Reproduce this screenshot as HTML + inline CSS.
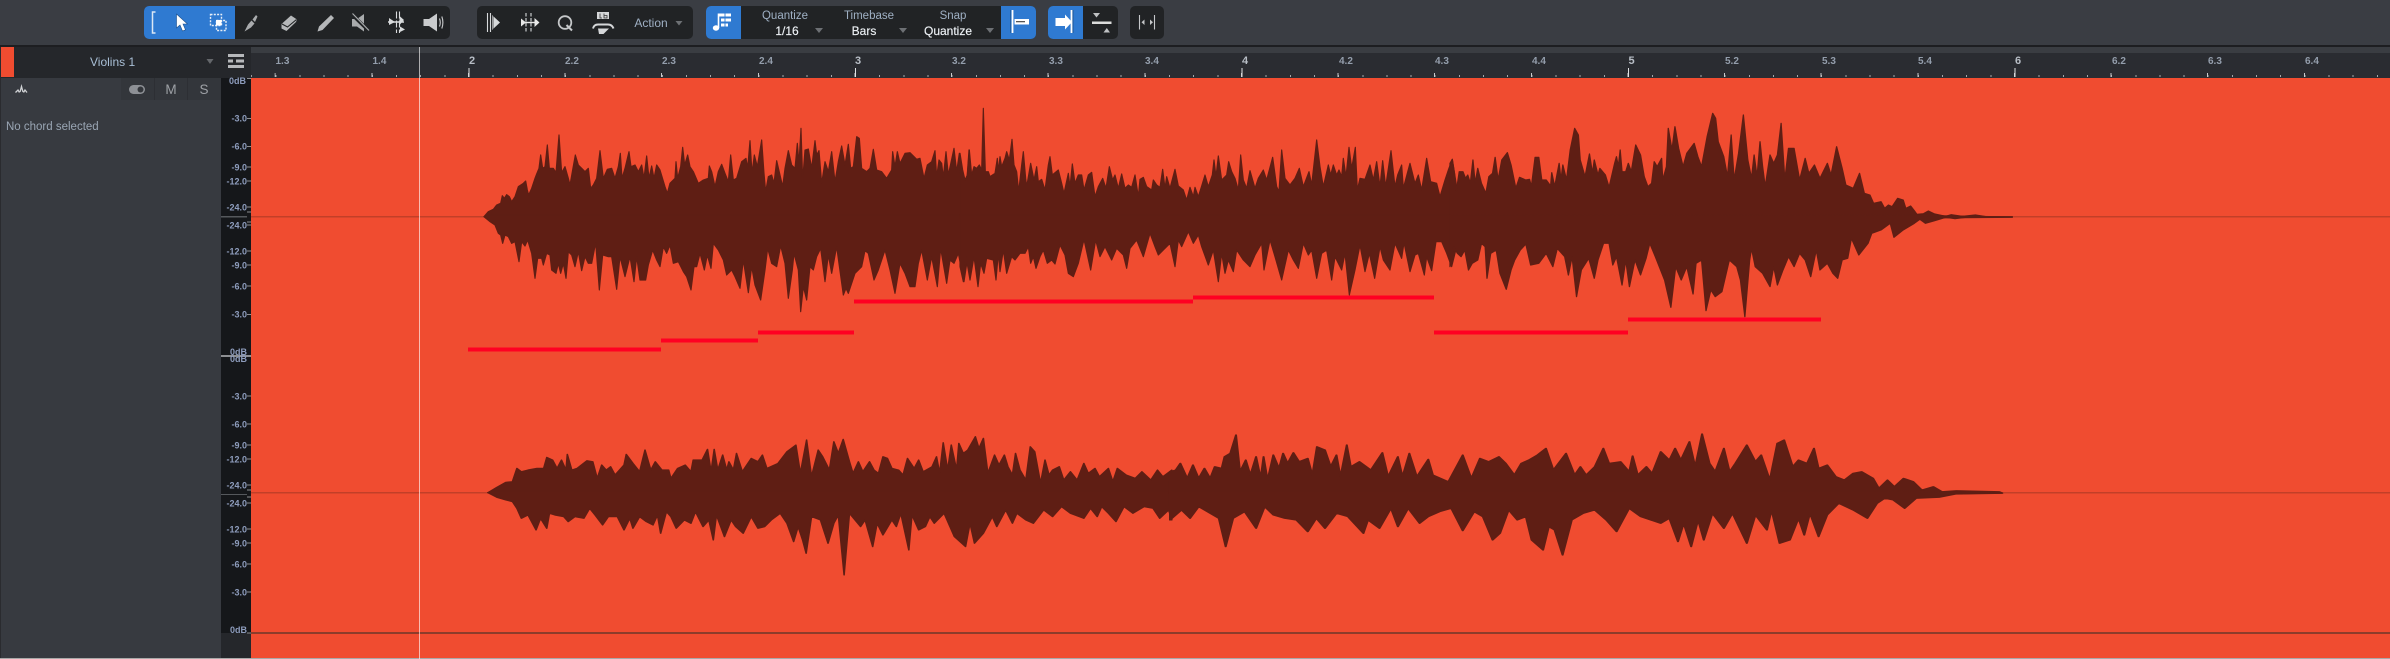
<!DOCTYPE html>
<html>
<head>
<meta charset="utf-8">
<style>
html,body{margin:0;padding:0;width:2390px;height:659px;overflow:hidden;background:#3a3d43}
svg{position:absolute;left:0;top:0;display:block}
text{font-family:"Liberation Sans",sans-serif}
.m{font-size:9px;font-weight:bold;fill:#8e9dbd;text-anchor:end}
.r{font-size:10px;font-weight:bold;fill:#949eac}
.b{font-size:11px;font-weight:bold;fill:#b8bec6}
.t{font-size:11.5px;fill:#9fb0c4;text-anchor:middle}
.v{font-size:12px;fill:#eef2f6;text-anchor:middle;stroke:#eef2f6;stroke-width:.15}
.tick{position:absolute;left:251px;width:2139px}
.w polygon{stroke:#5f1e14;stroke-width:3.500;stroke-linejoin:round}
</style>
</head>
<body>
<svg width="2390" height="659" viewBox="0 0 2390 659" xmlns="http://www.w3.org/2000/svg">
  <!-- base panels -->
  <rect width="2390" height="659" fill="#3a3d43"/>
  <rect y="45" width="2390" height="2" fill="#1d1e21"/>
  <rect x="1" y="47" width="250" height="31" fill="#25272b"/>
  <rect x="1" y="47" width="13" height="30" fill="#f04c30"/>
  <rect x="0" y="47" width="1" height="612" fill="#2a2b2f"/>
  <rect x="251" y="47" width="2139" height="31" fill="#2a2c31"/>
  <rect x="251" y="47" width="2139" height="6" fill="#3a3d42"/>
  <rect x="1" y="78" width="220" height="581" fill="#373a40"/>
  <rect x="121" y="78" width="100" height="22" fill="#33363b"/>
  <path d="M154.500 78V100M187.500 78V100" stroke="#2d2f34"/>
  <rect x="221" y="78" width="30" height="555" fill="#15171a"/>
  <rect x="221" y="633" width="30" height="26" fill="#25272b"/>
  <rect x="251" y="78" width="2139" height="580" fill="#f04c30"/>
  <rect y="658" width="2390" height="1" fill="#a9a9a9"/>

  <!-- toolbar groups -->
  <rect x="144" y="6" width="306" height="33" rx="5" fill="#212325"/>
  <path d="M235 6H149a5 5 0 0 0-5 5V34a5 5 0 0 0 5 5H235z" fill="#2f7ad1"/>
  <rect x="477" y="6" width="216" height="33" rx="5" fill="#212325"/>
  <rect x="706" y="6" width="330" height="33" rx="5" fill="#212325"/>
  <path d="M741 6H711a5 5 0 0 0-5 5V34a5 5 0 0 0 5 5H741z" fill="#2f7ad1"/>
  <path d="M1001 6H1031a5 5 0 0 1 5 5V34a5 5 0 0 1-5 5H1001z" fill="#2f7ad1"/>
  <rect x="1048" y="6" width="70" height="33" rx="5" fill="#212325"/>
  <path d="M1083 6H1053a5 5 0 0 0-5 5V34a5 5 0 0 0 5 5H1083z" fill="#2f7ad1"/>
  <rect x="1130" y="6" width="34" height="33" rx="5" fill="#212325"/>

  <!-- tool icons -->
  <path d="M155.500 12H152.500V33H155.500" fill="none" stroke="#dbe7f5" stroke-width="1.500"/>
  <path d="M176.500 14V28L180 25 182.500 31 185.500 29.800 183 24H187.500z" fill="#fff" stroke="#1c4f8a" stroke-width=".6"/>
  <g fill="none" stroke="#e6eef8" stroke-width="1.400" stroke-dasharray="2 1.300"><rect x="210.500" y="14.500" width="11" height="11"/><rect x="216.500" y="20.500" width="9.500" height="10"/></g>
  <rect x="216" y="20" width="5.500" height="5.500" fill="#fff"/>
  <path d="M244.500 31.500 248 24.500 251.500 20.500 254.500 23.500 251 27.500zM252.500 19.500 256 15 257.500 16.500 255 22z" fill="#a9abad"/>
  <path d="M281.500 24 291 15.500 297 19.500 296 22 286.500 31 281.500 28.500z" fill="#b5b7b9"/><path d="M282 24 287.500 27 296.500 19.500" fill="none" stroke="#212325" stroke-width="1.100"/>
  <path d="M317.500 31.500 319 26.500 331 15 334 18 322.500 30z" fill="#b5b7b9"/>
  <path d="M352 19H357L364 14V31.500L357 26.500H352z" fill="#a9abad"/><path d="M352 14.500 369 31" stroke="#212325" stroke-width="3.500"/><path d="M352.500 13.500 369 30.500" stroke="#a9abad" stroke-width="1.200"/>
  <path d="M396.500 11.500V33M399.500 11.500V33" stroke="#d8dadc" stroke-width="1.100" stroke-dasharray="7 2"/>
  <path d="M388 22H404" stroke="#d8dadc" stroke-width="1.500"/><path d="M389 18 395 22 389 25zM404 20 399.500 16V25zM400 26.500 405 29.500 400 32z" fill="#d8dadc"/>
  <path d="M423.500 19H429L437 13.500V31.500L429 26H423.500z" fill="#c9cbcd"/><path d="M439.500 18.500Q441 22.500 439.500 26.500M441.800 16.500Q444 22.500 441.800 28.500" fill="none" stroke="#c9cbcd" stroke-width="1.100"/>

  <path d="M487.500 13V32M490.500 13V32" stroke="#d8dadc" stroke-width="1.100"/><path d="M492 15 500 22.500 492 30z" fill="#d8dadc"/><path d="M493 15V30" stroke="#212325" stroke-width=".7"/>
  <path d="M526 13V32M531 13V32" stroke="#d8dadc" stroke-width="1.100" stroke-dasharray="3.500 1.500"/><path d="M523 22.500H537" stroke="#e8e8e8" stroke-width="1.400"/><path d="M521 18.500 526 22.500 521 26.500zM534.500 18 539.500 22.500 534.500 27z" fill="#e8e8e8"/>
  <circle cx="565" cy="22.500" r="6.300" fill="none" stroke="#c5c7c9" stroke-width="1.800"/><path d="M566.500 25 572 30.500" stroke="#c5c7c9" stroke-width="2"/>
  <rect x="597" y="12" width="12" height="7" fill="#d5d7d9"/><path d="M600 13.500V18H602M604 13.500V18H607V15.500H604" fill="none" stroke="#333" stroke-width=".8"/>
  <path d="M593 28.500Q594 24.500 598 24.500H608Q612 24.500 613.500 28.500" fill="none" stroke="#d5d7d9" stroke-width="2"/>
  <path d="M598 28.500H609L603.500 34H599z" fill="#d5d7d9"/>
  <path d="M718.500 13.500V28" stroke="#fff" stroke-width="1.600"/><ellipse cx="716" cy="28" rx="3.200" ry="2.700" fill="#fff"/>
  <path d="M719 13.500H731V16.500H719zM721 18.500H731V21.500H721zM721 23.500H728V26.500H721z" fill="#fff"/><path d="M725 13.500V27" stroke="#2f7ad1" stroke-width=".9"/>

  <path d="M1012.500 10V33" stroke="#fff" stroke-width="1.800"/><path d="M1010.800 10V33" stroke="#16406e" stroke-width=".5"/>
  <rect x="1014.500" y="19" width="14.500" height="5.500" fill="#fff"/><rect x="1016" y="21" width="9" height="1.300" fill="#555"/>
  <path d="M1055.500 18H1065V14.500L1072 22 1065 29.500V26H1055.500z" fill="#fff"/><path d="M1071.500 10V33" stroke="#fff" stroke-width="1.800"/><path d="M1073 10V33" stroke="#16406e" stroke-width=".6"/>
  <path d="M1093 13H1100L1096.500 17.500zM1103.500 32.500H1110L1106.800 28z" fill="#bfc1c3"/><rect x="1092" y="21.500" width="19.500" height="2.500" fill="#dcdcdc"/>
  <path d="M1139.500 15V29.500M1154.500 15V29.500" stroke="#c5c7c9" stroke-width="1.100"/><path d="M1144.500 19.500 1141.500 22.300 1144.500 25zM1150 19.500 1153 22.300 1150 25z" fill="#c5c7c9"/>

  <!-- toolbar text -->
  <text class="t" x="651" y="27" style="font-size:12px">Action</text>
  <path d="M675.500 21H682.500L679 25.500z" fill="#6d7074"/>
  <text class="t" x="785" y="19">Quantize</text>
  <text class="v" x="787" y="35">1/16</text>
  <path d="M815 28H823L819 33z" fill="#6d7074"/>
  <text class="t" x="869" y="19">Timebase</text>
  <text class="v" x="864" y="35">Bars</text>
  <path d="M899 28H907L903 33z" fill="#6d7074"/>
  <text class="t" x="953" y="19">Snap</text>
  <text class="v" x="948" y="35">Quantize</text>
  <path d="M986 28H994L990 33z" fill="#6d7074"/>

  <!-- track header -->
  <text x="90" y="66" style="font-size:12px;fill:#a9bfd6">Violins 1</text>
  <path d="M206.500 59H213.500L210 64z" fill="#64676b"/>
  <path d="M228 54H244V57H228zM228 59.500H233V62.500H228zM236 59.500H244V62.500H236zM228 65H244V68H228z" fill="#b6b8bb"/>
  <path d="M15.500 92.500 18 90 19.500 92.500M20 92 21.500 86.500 23 92M23.500 92.500 25 90 27 92.500" fill="none" stroke="#d0d2d5" stroke-width="1.300"/>
  <rect x="129" y="85" width="16" height="9" rx="4.500" fill="#8d9095"/><circle cx="140.500" cy="89.500" r="3" fill="#33363b"/>
  <text x="171" y="94" text-anchor="middle" style="font-size:13.500px;fill:#9ea1a6">M</text>
  <text x="204" y="94" text-anchor="middle" style="font-size:13.500px;fill:#9ea1a6">S</text>
  <text x="6" y="130" style="font-size:11.500px;fill:#9aa6b4">No chord selected</text>

  <!-- centre lines -->
  <rect x="251" y="216" width="2139" height="1.500" fill="#c23f28"/>
  <rect x="251" y="492" width="2139" height="1.500" fill="#c23f28"/>
  <rect x="251" y="632" width="2139" height="2" fill="#8c3c2b"/>
  <rect x="221" y="216" width="26" height="1.500" fill="#55585c"/>
  <rect x="221" y="494" width="26" height="1" fill="#55585c"/>
  <rect x="221" y="355" width="30" height="2" fill="#8d8f92"/>

  <!-- waveforms upper -->
  <g fill="#5f1e14" class="w">
  <g transform="translate(470,100) scale(.33333)">
  <polygon points="42,350 55,335 70,328 80,315 92,310 97,287 103,295 110,284 118,290 125,305 135,290 145,260 160,250 167,243 172,270 176,285 185,265 195,235 200,222 207,205 212,165 218,205 225,200 232,135 238,205 250,205 258,218 267,105 275,218 285,200 295,235 300,255 307,215 316,165 325,195 335,205 345,215 355,205 362,265 370,255 380,235 390,152 400,235 412,208 425,205 435,235 445,200 451,160 456,235 465,205 477,155 483,200 495,195 505,215 515,195 522,235 530,168 537,235 545,198 552,235 560,195 570,210 585,260 592,280 600,250 615,235 618,185 623,235 632,200 638,142 644,195 653,165 660,200 670,215 685,250 700,240 715,235 718,198 725,215 735,260 745,215 755,193 765,220 775,245 782,165 790,240 800,235 815,185 828,175 833,205 840,122 846,220 853,165 862,200 875,120 882,220 887,275 895,230 905,225 912,250 920,182 930,225 938,260 945,205 955,152 965,195 975,205 982,130 987,190 993,85 998,240 1005,150 1015,147 1025,205 1035,122 1040,165 1047,152 1055,250 1065,185 1075,215 1085,155 1095,245 1105,185 1115,138 1125,195 1135,133 1142,205 1150,200 1160,110 1168,115 1175,205 1190,215 1200,205 1210,148 1220,210 1235,215 1250,235 1265,210 1268,155 1275,200 1282,155 1290,190 1305,160 1320,158 1340,178 1350,175 1362,235 1372,195 1385,185 1395,152 1400,230 1407,180 1415,190 1420,232 1428,155 1435,225 1452,145 1460,215 1468,160 1480,235 1490,250 1497,150 1500,250 1500,356 50,356"/>
  <polygon points="42,350 60,365 75,375 85,400 92,405 98,430 105,405 115,410 125,430 135,425 147,485 155,425 165,438 173,420 185,460 195,535 203,475 215,475 220,495 230,460 240,465 245,510 258,520 265,490 272,520 280,490 288,535 295,455 305,465 315,500 325,455 335,512 345,470 355,490 365,490 377,428 388,570 398,465 415,470 425,470 440,568 450,470 465,530 480,470 492,545 500,470 510,540 527,540 535,495 548,450 560,480 570,500 580,440 590,460 600,435 610,490 625,485 640,515 650,530 663,570 672,500 680,500 690,460 703,510 712,465 723,505 730,430 745,450 760,480 770,525 785,510 795,530 810,565 820,480 835,578 845,500 855,555 872,600 885,510 893,445 905,490 920,500 932,437 945,490 955,595 967,510 972,460 985,510 992,635 1000,560 1010,600 1020,500 1030,510 1040,470 1052,445 1065,545 1075,465 1085,520 1100,440 1120,585 1128,565 1135,580 1145,550 1155,520 1175,500 1185,452 1195,460 1212,540 1225,510 1245,450 1260,510 1275,580 1290,490 1305,520 1320,560 1335,560 1345,490 1355,450 1372,540 1385,470 1402,560 1412,445 1430,550 1440,480 1452,490 1465,460 1482,545 1495,460 1500,470 1500,344 50,344"/>
  </g>
  <g transform="translate(960,100) scale(.33333)">
  <polygon points="0,160 8,210 15,240 22,225 28,150 35,225 42,200 50,205 58,195 65,210 70,25 76,215 85,215 90,230 105,220 112,175 115,215 120,170 125,200 135,175 140,155 148,180 156,118 162,195 170,215 176,275 185,195 190,155 197,235 200,260 212,190 222,240 230,200 235,245 245,238 255,270 265,195 270,170 277,225 295,210 305,250 312,280 325,220 330,260 337,192 345,250 355,225 365,225 372,270 385,225 395,217 405,290 415,260 428,235 438,265 448,200 458,240 465,225 475,265 485,222 495,265 505,255 515,262 525,225 535,290 540,238 550,232 560,260 575,270 580,240 590,255 600,262 608,208 615,265 620,230 630,265 645,208 655,258 670,270 680,300 690,262 700,290 705,262 715,290 725,258 735,225 745,260 757,225 762,180 768,230 775,168 785,240 800,225 806,185 815,215 825,235 835,270 842,165 850,240 860,265 870,212 885,265 895,235 910,210 920,240 938,172 950,260 957,275 965,150 975,235 990,255 1005,235 1018,205 1030,260 1047,215 1055,255 1070,120 1080,200 1090,260 1105,195 1112,225 1120,195 1130,225 1137,210 1145,230 1150,175 1158,230 1167,142 1175,205 1186,142 1192,270 1200,235 1215,238 1230,195 1240,240 1250,185 1260,260 1268,182 1277,260 1293,152 1305,260 1313,225 1325,195 1330,265 1350,190 1365,250 1375,225 1385,270 1400,175 1412,245 1430,250 1440,290 1455,240 1465,210 1477,178 1490,260 1500,250 1500,356 0,356"/>
  <polygon points="0,500 10,545 18,470 30,540 42,470 54,560 62,490 72,520 80,475 100,480 108,540 115,460 120,515 130,450 140,520 155,470 165,480 180,460 195,460 205,440 212,490 220,470 228,505 240,470 250,450 262,490 275,480 285,492 300,435 315,465 325,520 340,530 355,490 372,418 392,510 407,420 420,470 435,440 455,480 470,445 490,465 500,505 510,445 530,420 550,470 570,400 585,440 595,465 610,450 630,430 645,500 655,420 665,440 685,395 700,430 715,405 725,440 745,495 760,450 775,545 785,460 795,520 805,480 820,515 830,450 850,480 870,500 885,465 905,430 912,510 930,420 945,470 965,540 985,450 1000,480 1015,505 1030,430 1045,465 1055,450 1070,535 1085,460 1100,450 1115,540 1125,470 1145,510 1155,460 1168,585 1185,510 1200,435 1215,515 1228,460 1244,535 1260,440 1270,480 1290,510 1305,430 1325,475 1332,428 1350,515 1365,465 1375,460 1393,525 1400,470 1415,512 1428,425 1445,425 1460,460 1475,500 1490,440 1500,440 1500,344 0,344"/>
  </g>
  <g transform="translate(1450,100) scale(.36996,.33333)">
  <polygon points="0,190 6,178 12,220 17,275 25,215 35,215 42,235 48,225 55,250 62,180 68,250 75,205 85,250 97,280 105,230 115,220 122,172 130,240 140,180 155,158 165,195 178,265 188,232 205,240 215,238 220,260 230,172 240,172 248,240 260,240 272,258 275,218 283,260 295,190 300,240 305,195 315,240 325,150 337,85 347,105 352,180 365,230 377,162 385,220 390,180 400,225 405,205 420,225 430,262 445,190 450,170 455,200 460,150 465,215 475,215 482,190 490,215 502,135 515,165 525,230 535,260 545,250 552,185 560,200 572,175 575,240 585,200 590,85 600,150 608,80 618,145 630,200 640,160 650,145 660,130 670,170 680,200 695,110 710,40 718,55 725,125 740,170 750,230 760,105 768,240 780,160 793,45 805,180 815,235 822,165 830,230 838,125 845,200 852,260 865,165 875,190 885,165 895,70 905,240 915,145 930,145 945,240 960,175 970,220 985,195 1000,235 1020,190 1030,225 1045,140 1060,205 1070,255 1090,265 1107,220 1120,280 1135,285 1145,310 1165,305 1175,325 1185,315 1195,320 1210,295 1225,300 1232,325 1245,318 1255,332 1262,343 1280,341 1293,333 1310,342 1340,349 1355,344 1385,349 1420,345 1450,350 1520,350 1520,352 1250,354 0,356"/>
  <polygon points="0,500 10,440 20,460 30,470 40,450 50,510 60,490 75,480 85,430 95,440 100,535 110,460 125,450 135,520 152,568 165,510 175,480 190,450 205,432 218,495 240,490 260,460 278,500 290,445 310,470 320,525 330,470 342,590 355,510 375,475 390,535 400,480 415,430 430,430 440,495 450,470 465,555 475,480 485,560 500,480 515,525 530,475 540,430 555,470 580,540 597,622 610,500 625,540 640,500 657,582 665,490 680,480 692,632 705,570 717,590 735,575 755,480 775,500 785,540 797,650 810,480 815,445 825,500 845,520 865,560 875,500 885,555 900,510 915,470 930,500 945,460 960,480 975,530 990,450 1000,510 1020,490 1035,520 1048,535 1060,480 1075,475 1085,415 1105,465 1130,430 1140,400 1165,390 1190,370 1200,412 1225,390 1255,370 1270,358 1285,370 1310,362 1340,352 1365,356 1400,351 1520,351 1250,346 0,344"/>
  </g>
  <!-- waveforms lower -->
  <g transform="translate(470,420) scale(.44643,.33333)">
  <polygon points="40,218 60,202 80,187 95,185 105,145 115,155 130,150 150,145 165,145 172,112 185,120 195,145 205,120 215,150 218,103 228,150 240,145 262,122 275,125 285,175 295,135 305,150 315,140 325,165 345,135 350,103 365,130 380,155 392,90 405,150 415,125 430,150 445,150 450,175 465,145 482,135 495,155 500,120 520,120 532,88 540,155 547,88 555,150 566,105 575,150 580,125 590,150 597,100 610,155 630,115 645,125 655,105 665,145 690,130 710,95 730,75 740,160 754,60 765,170 780,90 790,110 805,150 815,65 825,100 836,58 850,125 858,160 870,125 880,155 895,125 905,150 915,160 925,110 935,115 945,145 960,150 970,165 980,115 995,145 1005,120 1015,155 1035,140 1045,110 1052,160 1060,68 1070,150 1078,75 1090,150 1095,70 1105,100 1115,90 1132,50 1140,85 1150,55 1160,160 1175,105 1185,135 1197,105 1205,140 1215,165 1222,100 1232,150 1245,180 1255,80 1265,95 1278,190 1288,120 1297,165 1305,150 1320,140 1330,180 1345,155 1360,180 1375,130 1385,160 1400,145 1410,170 1430,145 1440,185 1450,145 1470,165 1490,175 1505,155 1525,180 1540,150 1552,170 1572,150 1572,224 50,224"/>
  <polygon points="40,218 60,232 80,240 95,245 105,265 115,295 130,285 148,330 158,295 172,325 178,280 190,285 210,290 220,305 235,290 255,295 268,265 280,285 297,315 310,290 330,290 345,330 358,295 365,325 380,290 395,305 410,315 420,285 427,340 440,275 450,290 462,325 480,300 495,310 505,275 522,320 535,300 545,360 552,285 570,350 585,300 595,320 612,340 630,290 645,325 660,320 675,300 695,280 710,310 725,365 735,320 745,360 753,400 765,290 785,300 802,370 815,310 825,285 838,465 850,280 875,320 885,300 902,380 912,310 925,345 945,300 955,320 965,280 983,390 990,285 1005,330 1020,320 1030,290 1040,310 1062,280 1085,350 1110,380 1120,310 1130,370 1150,340 1170,290 1180,320 1200,270 1215,310 1225,280 1245,300 1262,310 1285,270 1305,290 1325,260 1345,280 1375,295 1390,265 1405,290 1415,260 1430,280 1447,305 1465,260 1485,280 1510,260 1530,265 1545,295 1565,270 1572,300 1572,212 50,212"/>
  </g>
  <g transform="translate(1170,420) scale(.57398,.33333)">
  <polygon points="0,155 10,150 18,130 30,175 40,135 50,175 60,145 70,175 78,140 90,145 95,110 105,100 115,45 122,155 132,120 140,165 150,110 158,175 163,110 170,180 180,105 190,145 197,100 205,130 215,98 225,125 240,115 248,165 256,80 270,90 280,140 290,105 297,170 308,75 315,140 330,125 350,150 370,98 380,170 397,110 405,170 417,100 430,170 450,118 458,165 465,170 485,185 510,105 525,175 540,115 555,125 573,110 585,130 600,165 612,130 625,120 640,105 655,85 668,150 690,100 705,165 715,140 725,165 740,140 755,85 765,130 785,125 800,155 806,108 815,165 830,140 840,160 855,95 870,120 880,85 890,120 905,65 915,140 927,42 940,130 950,155 965,85 975,155 985,130 1005,75 1020,125 1030,105 1045,180 1058,70 1070,60 1085,140 1095,120 1110,130 1122,85 1130,145 1145,135 1160,170 1175,180 1190,160 1205,155 1225,175 1235,205 1250,180 1262,200 1278,175 1295,185 1310,210 1330,200 1345,215 1370,212 1445,215 1450,219 1250,224 0,224"/>
  <polygon points="0,300 20,270 35,295 50,260 70,280 85,295 97,380 110,295 130,275 150,325 165,260 180,285 200,295 220,300 240,335 255,295 270,325 290,280 310,290 337,340 345,300 365,325 385,265 397,320 415,265 435,310 450,290 470,275 490,265 510,332 530,275 545,290 562,360 575,340 590,270 605,300 620,290 630,360 650,390 660,320 670,330 684,405 700,300 720,280 740,270 760,300 778,335 800,265 820,290 855,310 870,295 885,365 895,310 908,380 920,300 930,360 945,280 965,325 980,280 1005,370 1020,285 1040,330 1048,270 1062,370 1080,360 1095,295 1105,345 1115,280 1130,350 1145,285 1165,250 1190,270 1215,295 1232,250 1245,235 1260,240 1280,265 1300,235 1340,232 1370,222 1450,220 1250,212 0,212"/>
  </g>
  </g>

  <!-- notes -->
  <g fill="#ff0022">
    <rect x="468" y="347.500" width="193" height="4"/>
    <rect x="661" y="338.500" width="97" height="4"/>
    <rect x="758" y="330.500" width="96" height="4"/>
    <rect x="854" y="299.500" width="339" height="4"/>
    <rect x="1193" y="295.500" width="241" height="4"/>
    <rect x="1434" y="330.500" width="194" height="4"/>
    <rect x="1628" y="317.500" width="193" height="4"/>
  </g>

  <!-- meter ticks -->
  <path d="M247 78.500H251M247 118.500H251M247 146.500H251M247 167H251M247 181H251M247 207H251M247 212H251M247 222H251M247 225H251M247 251H251M247 265H251M247 286H251M247 314.500H251M247 396H251M247 424H251M247 445H251M247 459H251M247 485H251M247 490H251M247 497H251M247 503H251M247 529H251M247 543H251M247 564H251M247 592H251M247 633H251" stroke="#8d8f92" stroke-width="1"/>
  <g>
    <text class="m" x="246" y="84">0dB</text>
    <text class="m" x="247" y="121.500">-3.0</text>
    <text class="m" x="247" y="149.500">-6.0</text>
    <text class="m" x="247" y="170.500">-9.0</text>
    <text class="m" x="247" y="184.500">-12.0</text>
    <text class="m" x="247" y="210.500">-24.0</text>
    <text class="m" x="247" y="228.500">-24.0</text>
    <text class="m" x="247" y="254.500">-12.0</text>
    <text class="m" x="247" y="268.500">-9.0</text>
    <text class="m" x="247" y="289.500">-6.0</text>
    <text class="m" x="247" y="317.500">-3.0</text>
    <text class="m" x="247" y="355">0dB</text>
    <text class="m" x="247" y="362">0dB</text>
    <text class="m" x="247" y="399.500">-3.0</text>
    <text class="m" x="247" y="427.500">-6.0</text>
    <text class="m" x="247" y="448.500">-9.0</text>
    <text class="m" x="247" y="462.500">-12.0</text>
    <text class="m" x="247" y="488.500">-24.0</text>
    <text class="m" x="247" y="506.500">-24.0</text>
    <text class="m" x="247" y="532.500">-12.0</text>
    <text class="m" x="247" y="546.500">-9.0</text>
    <text class="m" x="247" y="567.500">-6.0</text>
    <text class="m" x="247" y="595.500">-3.0</text>
    <text class="m" x="247" y="633">0dB</text>
  </g>

  <!-- ruler labels -->
  <g>
    <text class="r" x="275.500" y="64">1.3</text>
    <text class="r" x="372.500" y="64">1.4</text>
    <text class="b" x="469" y="64">2</text>
    <text class="r" x="565" y="64">2.2</text>
    <text class="r" x="662" y="64">2.3</text>
    <text class="r" x="759" y="64">2.4</text>
    <text class="b" x="855" y="64">3</text>
    <text class="r" x="952" y="64">3.2</text>
    <text class="r" x="1049" y="64">3.3</text>
    <text class="r" x="1145" y="64">3.4</text>
    <text class="b" x="1242" y="64">4</text>
    <text class="r" x="1339" y="64">4.2</text>
    <text class="r" x="1435" y="64">4.3</text>
    <text class="r" x="1532" y="64">4.4</text>
    <text class="b" x="1628.500" y="64">5</text>
    <text class="r" x="1725" y="64">5.2</text>
    <text class="r" x="1822" y="64">5.3</text>
    <text class="r" x="1918" y="64">5.4</text>
    <text class="b" x="2015" y="64">6</text>
    <text class="r" x="2112" y="64">6.2</text>
    <text class="r" x="2208" y="64">6.3</text>
    <text class="r" x="2305" y="64">6.4</text>
  </g>
</svg>

<!-- ruler ticks -->
<div class="tick" style="top:75px;height:2px;background:repeating-linear-gradient(90deg,#a4a7ab 0 1px,transparent 1px 24.156px);transform:translateX(0.100px)"></div>
<div class="tick" style="top:73px;height:4px;background:repeating-linear-gradient(90deg,#c8cacd 0 1px,transparent 1px 96.625px);transform:translateX(23.700px)"></div>
<div class="tick" style="top:68px;height:9px;background:repeating-linear-gradient(90deg,#e0e2e4 0 1px,transparent 1px 386.500px);transform:translateX(217.300px)"></div>
<!-- playhead -->
<div style="position:absolute;left:419px;top:47px;width:1px;height:612px;background:rgba(255,255,255,.62)"></div>
</body>
</html>
